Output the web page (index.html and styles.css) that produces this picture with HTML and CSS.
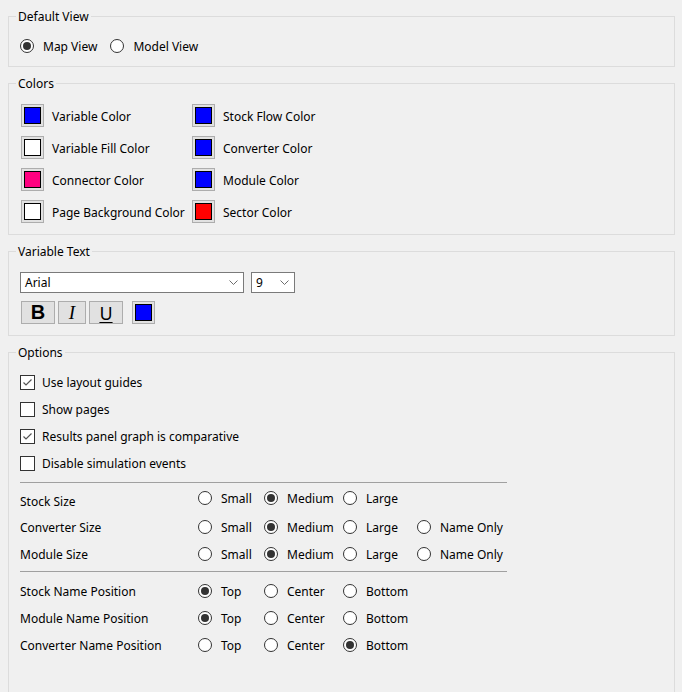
FILE: index.html
```html
<!DOCTYPE html>
<html>
<head>
<meta charset="utf-8">
<link rel="stylesheet" href="styles.css">
</head>
<body>
<div class="page">
  <fieldset class="group">
    <legend>Default View</legend>
    <div class="view-body">
      <label class="opt"><span class="radio on"></span>Map View</label>
      <label class="opt"><span class="radio"></span>Model View</label>
    </div>
  </fieldset>

  <fieldset class="group">
    <legend>Colors</legend>
    <div class="colors-body">
      <div class="color-item"><span class="swatch"><span class="fill c-blue"></span></span>Variable Color</div>
      <div class="color-item"><span class="swatch"><span class="fill c-blue"></span></span>Stock Flow Color</div>
      <div class="color-item"><span class="swatch"><span class="fill c-white"></span></span>Variable Fill Color</div>
      <div class="color-item"><span class="swatch"><span class="fill c-blue"></span></span>Converter Color</div>
      <div class="color-item"><span class="swatch"><span class="fill c-pink"></span></span>Connector Color</div>
      <div class="color-item"><span class="swatch"><span class="fill c-blue"></span></span>Module Color</div>
      <div class="color-item"><span class="swatch"><span class="fill c-white"></span></span>Page Background Color</div>
      <div class="color-item"><span class="swatch"><span class="fill c-red"></span></span>Sector Color</div>
    </div>
  </fieldset>

  <fieldset class="group">
    <legend>Variable Text</legend>
    <div class="text-body">
      <div class="font-row">
        <div class="select font-select"><span>Arial</span>
          <svg class="chev" width="9" height="5" viewBox="0 0 9 5"><polyline points="0.5,0.5 4.5,4.5 8.5,0.5" fill="none" stroke="#6d6d6d" stroke-width="1"/></svg>
        </div>
        <div class="select size-select"><span>9</span>
          <svg class="chev" width="9" height="5" viewBox="0 0 9 5"><polyline points="0.5,0.5 4.5,4.5 8.5,0.5" fill="none" stroke="#6d6d6d" stroke-width="1"/></svg>
        </div>
      </div>
      <div class="btn-row">
        <span class="btn btn-b">B</span>
        <span class="btn btn-i">I</span>
        <span class="btn btn-u">U</span>
        <span class="swatch text-swatch"><span class="fill c-blue"></span></span>
      </div>
    </div>
  </fieldset>

  <fieldset class="group options">
    <legend>Options</legend>
    <div class="options-body">
      <div class="checks">
        <label class="check-row"><span class="checkbox"><svg width="13" height="13" viewBox="0 0 13 13"><polyline points="2.5,6.5 5,9 10.5,3.5" fill="none" stroke="#555" stroke-width="1.2"/></svg></span>Use layout guides</label>
        <label class="check-row"><span class="checkbox"></span>Show pages</label>
        <label class="check-row"><span class="checkbox"><svg width="13" height="13" viewBox="0 0 13 13"><polyline points="2.5,6.5 5,9 10.5,3.5" fill="none" stroke="#555" stroke-width="1.2"/></svg></span>Results panel graph is comparative</label>
        <label class="check-row"><span class="checkbox"></span>Disable simulation events</label>
      </div>
      <div class="sep sep-1"></div>
      <div class="prow prow-first">
        <span class="plabel">Stock Size</span>
        <label class="opt"><span class="radio"></span>Small</label>
        <label class="opt"><span class="radio on"></span>Medium</label>
        <label class="opt"><span class="radio"></span>Large</label>
      </div>
      <div class="prow prow-b">
        <span class="plabel">Converter Size</span>
        <label class="opt"><span class="radio"></span>Small</label>
        <label class="opt"><span class="radio on"></span>Medium</label>
        <label class="opt"><span class="radio"></span>Large</label>
        <label class="opt"><span class="radio"></span>Name Only</label>
      </div>
      <div class="prow">
        <span class="plabel">Module Size</span>
        <label class="opt"><span class="radio"></span>Small</label>
        <label class="opt"><span class="radio on"></span>Medium</label>
        <label class="opt"><span class="radio"></span>Large</label>
        <label class="opt"><span class="radio"></span>Name Only</label>
      </div>
      <div class="sep sep-2"></div>
      <div class="prow prow-pos1">
        <span class="plabel">Stock Name Position</span>
        <label class="opt"><span class="radio on"></span>Top</label>
        <label class="opt"><span class="radio"></span>Center</label>
        <label class="opt"><span class="radio"></span>Bottom</label>
      </div>
      <div class="prow">
        <span class="plabel">Module Name Position</span>
        <label class="opt"><span class="radio on"></span>Top</label>
        <label class="opt"><span class="radio"></span>Center</label>
        <label class="opt"><span class="radio"></span>Bottom</label>
      </div>
      <div class="prow">
        <span class="plabel">Converter Name Position</span>
        <label class="opt"><span class="radio"></span>Top</label>
        <label class="opt"><span class="radio"></span>Center</label>
        <label class="opt"><span class="radio on"></span>Bottom</label>
      </div>
    </div>
  </fieldset>
</div>
</body>
</html>
```

FILE: styles.css
```css
html, body {
  margin: 0;
  padding: 0;
  overflow: hidden;
  background: #f0f0f0;
}
body {
  font-family: "Noto Sans", "Open Sans", sans-serif;
  font-size: 12px;
  color: #000;
}
.page {
  padding: 8px 7px 0 8px;
}
.group {
  margin: 8px 0 0 0;
  padding: 0;
  border: 1px solid #dcdcdc;
  min-width: 0;
}
.group:first-child {
  margin-top: 0;
}
.group legend {
  margin-left: 7px;
  padding: 0 2px;
  line-height: 18px;
  height: 16px;
}

/* radio & checkbox */
.opt {
  display: flex;
  align-items: center;
  gap: 9px;
  height: 20px;
  white-space: nowrap;
}
.radio {
  width: 14px;
  height: 14px;
  box-sizing: border-box;
  border: 1px solid #333;
  border-radius: 50%;
  background: #fff;
  display: flex;
  align-items: center;
  justify-content: center;
  flex: none;
}
.radio.on::after {
  content: "";
  width: 8px;
  height: 8px;
  border-radius: 50%;
  background: #333;
}
.checkbox {
  width: 15px;
  height: 15px;
  box-sizing: border-box;
  border: 1px solid #333;
  background: #fff;
  display: flex;
  flex: none;
}

/* default view */
.view-body {
  display: flex;
  gap: 13px;
  padding: 12px 11px 10px 11px;
}

/* colors */
.colors-body {
  display: grid;
  grid-template-columns: 171px auto;
  row-gap: 9px;
  padding: 13px 12px 11px 12px;
}
.color-item {
  display: flex;
  align-items: center;
  gap: 8px;
  height: 23px;
  padding-top: 1px;
  box-sizing: border-box;
  white-space: nowrap;
}
.color-item .swatch {
  margin-top: -1px;
}
.swatch {
  width: 23px;
  height: 23px;
  box-sizing: border-box;
  border: 1px solid #adadad;
  background: #e1e1e1;
  padding: 2px;
  flex: none;
  display: block;
}
.fill {
  display: block;
  width: 17px;
  height: 17px;
  box-sizing: border-box;
  border: 1px solid #000;
}
.c-blue { background: #0000ff; }
.c-white { background: #ffffff; }
.c-pink { background: #ff0080; }
.c-red { background: #ff0000; }

/* variable text */
.text-body {
  padding: 13px 11px 11px 11px;
}
.font-row {
  display: flex;
  gap: 7px;
}
.select {
  height: 21px;
  box-sizing: border-box;
  border: 1px solid #7a7a7a;
  background: #fff;
  display: flex;
  align-items: center;
  justify-content: space-between;
  padding: 0 5px 0 4px;
}
.font-select { width: 224px; }
.size-select { width: 44px; }
.chev { display: block; }
.btn-row {
  display: flex;
  margin: 8px 0 0 1px;
  gap: 3px;
}
.btn {
  height: 23px;
  box-sizing: border-box;
  border: 1px solid #adadad;
  background: #e1e1e1;
  display: flex;
  align-items: center;
  justify-content: center;
}
.btn-b {
  width: 34px;
  font-family: "Liberation Sans", Arial, sans-serif;
  font-weight: bold;
  font-size: 20px;
}
.btn-i {
  width: 28px;
  font-family: "Liberation Serif", serif;
  font-style: italic;
  font-size: 19px;
}
.btn-u {
  width: 34px;
  font-family: "Noto Sans", sans-serif;
  font-size: 18px;
  text-decoration: underline;
  text-underline-offset: 2px;
}
.text-swatch {
  margin-left: 6px;
}

/* options */
.options {
  min-height: 360px;
}
.options-body {
  padding: 12px 11px 40px 11px;
}
.checks {
  display: flex;
  flex-direction: column;
  gap: 7px;
}
.check-row {
  display: flex;
  align-items: center;
  gap: 7px;
  height: 20px;
}
.sep {
  width: 487px;
  height: 1px;
  background: #a0a0a0;
}
.sep-1 { margin-top: 9px; }
.sep-2 { margin-top: 7px; }
.prow {
  display: grid;
  grid-template-columns: 178px 66px 79px 74px auto;
  align-items: center;
  height: 20px;
  margin-top: 7px;
}
.prow-first {
  height: 24px;
  margin-top: 5px;
}
.prow-first .plabel { align-self: end; line-height: 20px; }
.prow-first .opt { align-self: start; }
.prow-b { margin-top: 5px; }
.prow-pos1 { margin-top: 9px; }
.plabel {
  white-space: nowrap;
}
```
